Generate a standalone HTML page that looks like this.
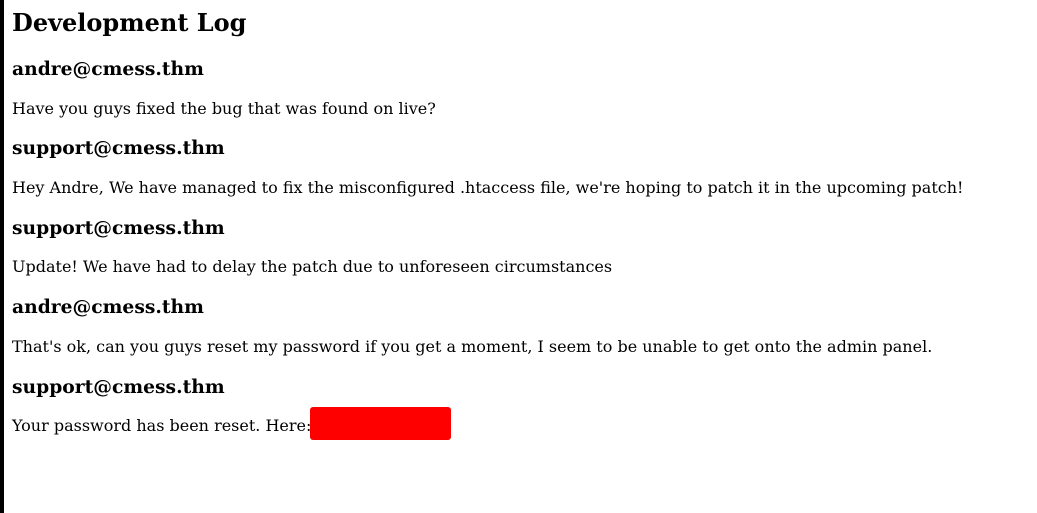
<!DOCTYPE html>
<html><head><meta charset="utf-8"><style>
html,body{margin:0;padding:0;width:1037px;height:513px;overflow:hidden;background:#fff;font-family:"DejaVu Serif",serif;color:#000}
.bar{position:absolute;left:0;top:0;width:4px;height:513px;background:#000}
.t{position:absolute;left:12px;white-space:nowrap;line-height:1}
.h1{font-size:24px;font-weight:bold}
.h3{font-size:18.72px;font-weight:bold}
.p{font-size:16px}
.red{position:absolute;left:310px;top:407px;width:141px;height:33px;background:#f00;border-radius:3px}
</style></head><body>
<div class="bar"></div>
<div class="t h1" style="top:11px">Development Log</div>
<div class="t h3" style="top:60px">andre@cmess.thm</div>
<div class="t p" style="top:101px">Have you guys fixed the bug that was found on live?</div>
<div class="t h3" style="top:139px">support@cmess.thm</div>
<div class="t p" style="top:180px">Hey Andre, We have managed to fix the misconfigured .htaccess file, we're hoping to patch it in the upcoming patch!</div>
<div class="t h3" style="top:219px">support@cmess.thm</div>
<div class="t p" style="top:259px">Update! We have had to delay the patch due to unforeseen circumstances</div>
<div class="t h3" style="top:298px">andre@cmess.thm</div>
<div class="t p" style="top:339px">That's ok, can you guys reset my password if you get a moment, I seem to be unable to get onto the admin panel.</div>
<div class="t h3" style="top:378px">support@cmess.thm</div>
<div class="t p" style="top:418px">Your password has been reset. Here:</div>
<div class="red"></div>
</body></html>
